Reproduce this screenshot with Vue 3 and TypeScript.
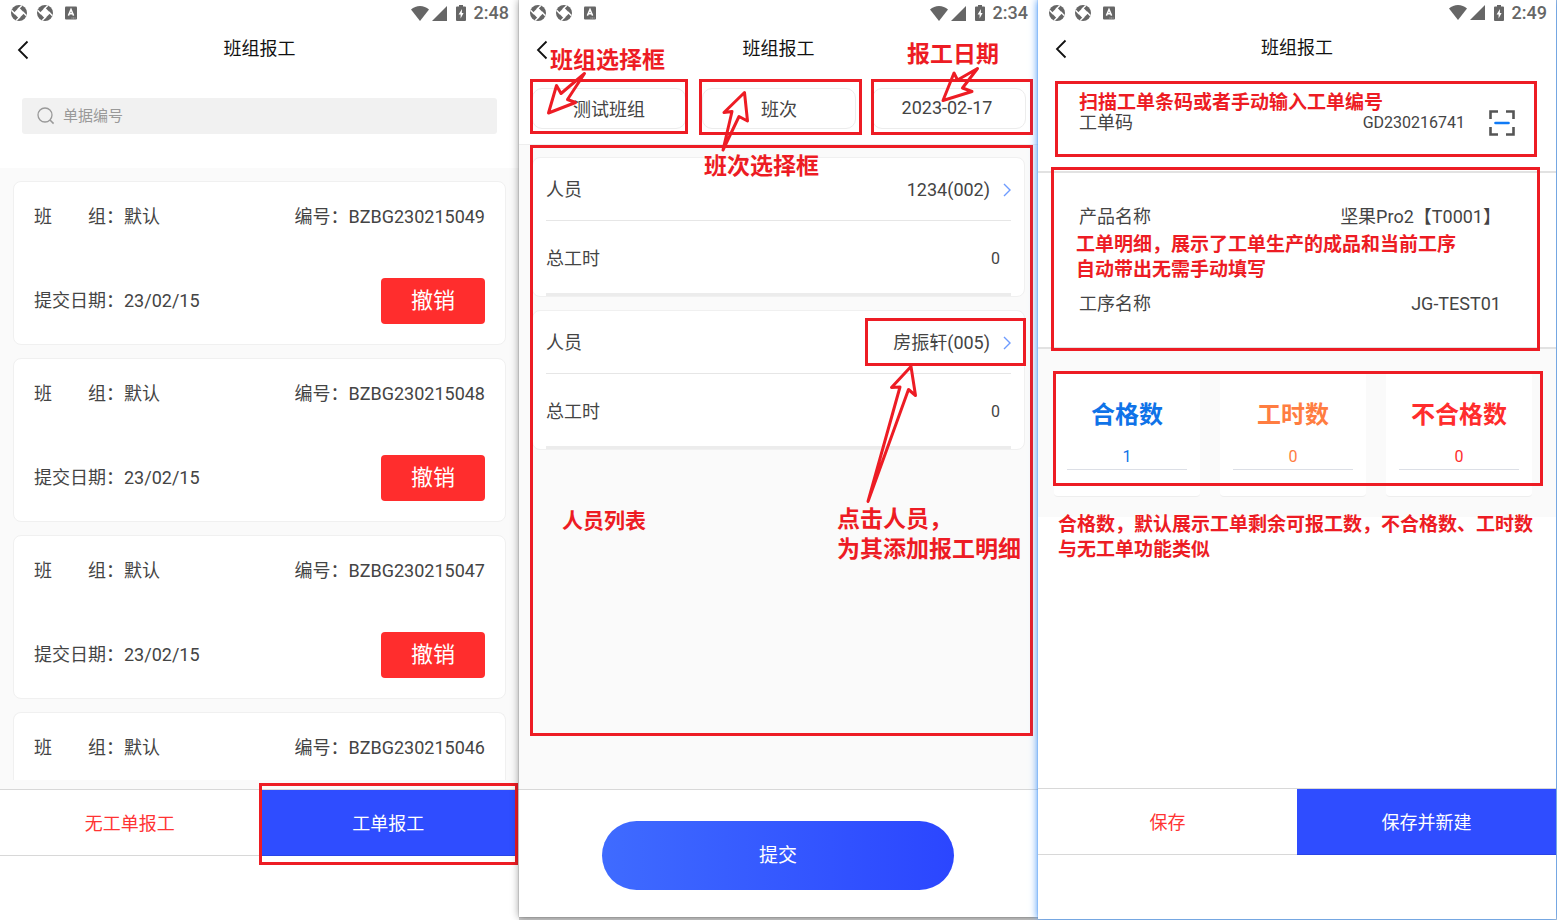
<script setup lang="ts">
import { ref } from 'vue'

interface Report { code: string; team: string; date?: string }
interface Worker { name: string; hours: number }

const screens = [
  { key: 'list', time: '2:48' },
  { key: 'team', time: '2:34' },
  { key: 'order', time: '2:49' },
]

const keyword = ref('')
const team = ref('测试班组')
const shift = ref('班次')
const workDate = ref('2023-02-17')
const orderCode = ref('GD230216741')

const reports: Report[] = [
  { code: 'BZBG230215049', team: '默认', date: '23/02/15' },
  { code: 'BZBG230215048', team: '默认', date: '23/02/15' },
  { code: 'BZBG230215047', team: '默认', date: '23/02/15' },
  { code: 'BZBG230215046', team: '默认' },
]

const workers: Worker[] = [
  { name: '1234(002)', hours: 0 },
  { name: '房振轩(005)', hours: 0 },
]

const counts = ref([
  { id: 'ok', label: '合格数', value: '1' },
  { id: 'hours', label: '工时数', value: '0' },
  { id: 'bad', label: '不合格数', value: '0' },
])
</script>

<template>
  <div class="board">
    <section v-for="s in screens" :key="s.key" class="phone" :class="s.key">
      <div class="status">
        <svg v-for="n in 2" :key="n" class="swirl" viewBox="0 0 16 16" aria-hidden="true">
          <circle cx="8" cy="8" r="8" fill="#666" />
          <path d="M8 2.600 13.400 8 8 13.400 2.600 8Z" fill="#fff" />
          <path d="M7 4.200 10.800.600M11.800 7 15.400 10.800M9 11.800 5.200 15.400M4.200 9 .600 5.200" stroke="#fff" stroke-width="1.400" />
        </svg>
        <svg class="abox" viewBox="0 0 12 14" aria-hidden="true">
          <rect width="12" height="13" y=".5" rx="1" fill="#666" />
          <path d="M3.400 9.600 6 3.400l2.600 6.200M4.400 7.800h3.200" stroke="#fff" stroke-width="1.500" fill="none" />
          <path d="M6.500 12h4" stroke="#ccc" stroke-width=".8" stroke-dasharray="1 .6" />
        </svg>
        <span class="grow"></span>
        <svg class="wifi" viewBox="0 0 18 15" aria-hidden="true">
          <path d="M0 3.600C5-1.200 13-1.200 18 3.600L9 15Z" fill="#666" />
        </svg>
        <svg class="signal" viewBox="0 0 15 15" aria-hidden="true"><path d="M15 0V15H0Z" fill="#666" /></svg>
        <svg class="battery" viewBox="0 0 10 16" aria-hidden="true">
          <path d="M3 0h4v1.600h2q1 0 1 1V15q0 1-1 1H1q-1 0-1-1V2.600q0-1 1-1h2Z" fill="#666" />
          <path d="M6 4 2.600 9.400H4.600V13.600L7.600 8H5.800Z" fill="#fff" />
        </svg>
        <span class="time">{{ s.time }}</span>
      </div>
      <header class="bar">
        <button class="back" type="button" aria-label="返回">
          <svg viewBox="0 0 12 20" aria-hidden="true"><path d="M10.500 1.500 2 10l8.500 8.500" fill="none" stroke="#111" stroke-width="1.800" /></svg>
        </button>
        <h1>班组报工</h1>
      </header>

      <template v-if="s.key === 'list'">
        <div class="search-wrap">
          <label class="search">
            <svg viewBox="0 0 18 18" aria-hidden="true">
              <circle cx="8" cy="8" r="7" fill="none" stroke="#999" stroke-width="1.300" />
              <path d="m13 13 3.600 3.600" stroke="#999" stroke-width="1.500" />
            </svg>
            <input v-model="keyword" type="text" placeholder="单据编号" aria-label="单据编号" />
          </label>
        </div>
        <main class="reports">
          <div class="report-scroll">
            <article v-for="r in reports" :key="r.code" class="report">
              <div class="line">
                <span>班&#x3000;&#x3000;组：{{ r.team }}</span>
                <span>编号：{{ r.code }}</span>
              </div>
              <div v-if="r.date" class="line">
                <span>提交日期：{{ r.date }}</span>
                <button class="revoke" type="button">撤销</button>
              </div>
            </article>
          </div>
        </main>
        <footer class="actions">
          <div class="pair">
            <button type="button">无工单报工</button>
            <button type="button" class="primary">工单报工</button>
          </div>
          <i class="mark m-order"></i>
        </footer>
      </template>

      <template v-else-if="s.key === 'team'">
        <div class="filters">
          <select v-model="team" aria-label="班组"><option>测试班组</option></select>
          <select v-model="shift" aria-label="班次"><option>班次</option></select>
          <input v-model="workDate" type="text" aria-label="报工日期" />
          <i class="mark m-team"></i>
          <i class="mark m-shift"></i>
          <i class="mark m-date"></i>
        </div>
        <main class="workers">
          <article v-for="w in workers" :key="w.name" class="worker">
            <button type="button" class="who">
              <span>人员</span>
              <span class="name">{{ w.name }}</span>
              <svg viewBox="0 0 8 14" aria-hidden="true"><path d="m1 1 6 6-6 6" fill="none" stroke="#6d9bff" stroke-width="1.400" /></svg>
            </button>
            <div class="total"><span>总工时</span><span class="sum">{{ w.hours }}</span></div>
          </article>
          <i class="mark m-list"></i>
          <i class="mark m-person"></i>
        </main>
        <footer class="submit-area"><button type="button" class="submit">提交</button></footer>
        <svg class="arrows" width="518" height="520" viewBox="0 0 518 520" aria-hidden="true">
          <path d="M65.500 73.500 42 93.500 37.500 85.500 29.500 113 56.500 102.500 48.500 99.500Z" />
          <path d="M204 150 213 111.500 205 112.500 225.500 92.500 228.500 121 220 116.500Z" />
          <path d="M458.500 68.500 438.500 80 435 73 424 100.500 453 91.500 443.500 88Z" />
          <path d="M349 501.500 381 387 372.500 387.500 392 366.500 396.500 395.500 389.500 389.500Z" />
        </svg>
        <p class="note big n-team">班组选择框</p>
        <p class="note big n-shift">班次选择框</p>
        <p class="note big n-date">报工日期</p>
        <p class="note mid n-list">人员列表</p>
        <p class="note big n-person">点击人员，<br />为其添加报工明细</p>
      </template>

      <template v-else>
        <div class="code-row">
          <label for="order-code">工单码</label>
          <input id="order-code" v-model="orderCode" type="text" />
          <button type="button" class="scan" aria-label="扫描">
            <svg viewBox="0 0 26 26" aria-hidden="true">
              <path d="M1.500 9V1.500H9M17 1.500h7.500V9M24.500 17v7.500H17M9 24.500H1.500V17" fill="none" stroke="#555" stroke-width="2.600" />
              <path d="M6.500 13h13" stroke="#0f7af5" stroke-width="2.600" stroke-linecap="round" />
            </svg>
          </button>
          <i class="mark m-code"></i>
          <p class="note n-code">扫描工单条码或者手动输入工单编号</p>
        </div>
        <div class="details">
          <div class="detail"><span>产品名称</span><span>坚果Pro2【T0001】</span></div>
          <div class="detail"><span>工序名称</span><span>JG-TEST01</span></div>
          <i class="mark m-details"></i>
          <p class="note n-details">工单明细，展示了工单生产的成品和当前工序<br />自动带出无需手动填写</p>
        </div>
        <div class="counts">
          <div v-for="c in counts" :key="c.id" class="count" :class="c.id">
            <label :for="c.id">{{ c.label }}</label>
            <input :id="c.id" v-model="c.value" type="text" inputmode="numeric" />
          </div>
          <i class="mark m-counts"></i>
          <p class="note n-counts">合格数，默认展示工单剩余可报工数，不合格数、工时数<br />与无工单功能类似</p>
        </div>
        <div class="grow"></div>
        <footer class="actions">
          <div class="pair">
            <button type="button">保存</button>
            <button type="button" class="primary">保存并新建</button>
          </div>
        </footer>
      </template>
    </section>
  </div>
</template>

<style>
body {
  margin: 0;
}
</style>

<style scoped>
.board {
  display: grid;
  grid-template-columns: repeat(3, minmax(0, 1fr));
  height: 100vh;
  min-height: 760px;
  overflow: hidden;
  background: linear-gradient(90deg, #fff 33%, #ccc 33%);
  font-family: Roboto, 'Noto Sans CJK SC', sans-serif;
  font-size: 18px;
  line-height: 24px;
  color: #444;
}
.board * {
  box-sizing: border-box;
}
button,
input,
select {
  font: inherit;
  color: inherit;
  border: 0;
  padding: 0;
  margin: 0;
  background: none;
  border-radius: 0;
  outline: 0;
}
button {
  cursor: pointer;
}
.phone {
  position: relative;
  display: flex;
  flex-direction: column;
  min-width: 0;
  min-height: 0;
  background: #fff;
}
.team {
  z-index: 1;
  margin-bottom: 3px;
  box-shadow: 0 0 8px rgba(0, 0, 0, 0.4), 0 0 1px #777;
}
.order {
  z-index: 2;
  margin: 0 1px 1px 0;
  box-shadow: 0 0 8px #2f88f5, 0 0 1px #2f88f5;
}
.grow {
  flex: 1;
}

/* status bar and title */
.status {
  display: flex;
  align-items: center;
  height: 26px;
  flex: none;
  padding: 0 10px 0 11px;
}
.order .status {
  height: 25px;
  padding-right: 9px;
}
.swirl {
  width: 16px;
  height: 16px;
  margin-right: 10px;
}
.abox {
  width: 12px;
  height: 14px;
  margin-left: 2px;
}
.wifi {
  width: 18px;
  height: 15px;
  margin-right: 3px;
}
.signal {
  width: 15px;
  height: 15px;
  margin-right: 9px;
}
.battery {
  width: 10px;
  height: 16px;
  margin-right: 8px;
}
.time {
  font-weight: 500;
  color: #666;
}
.bar {
  position: relative;
  flex: none;
  height: 46px;
  display: flex;
  align-items: center;
  justify-content: center;
}
h1 {
  margin: 0;
  font-size: 18px;
  font-weight: 400;
  color: #111;
}
.back {
  position: absolute;
  left: 17px;
  top: 14px;
  width: 12px;
  height: 20px;
}
.back svg {
  display: block;
  width: 12px;
  height: 20px;
}

/* report list */
.search-wrap {
  flex: none;
  padding: 26px 22px 34px;
}
.search {
  display: flex;
  align-items: center;
  gap: 8px;
  height: 36px;
  padding: 0 15px;
  border-radius: 3px;
  background: #f1f1f1;
}
.search svg {
  width: 18px;
  height: 18px;
}
.search input {
  flex: 1;
  min-width: 0;
  font-size: 15px;
}
.search input::placeholder {
  color: #999;
  opacity: 1;
}
.reports {
  flex: 1;
  min-height: 0;
  padding: 13px 13px 9px;
  background: #fafafa;
  display: flex;
}
.report-scroll {
  flex: 1;
  display: flex;
  flex-direction: column;
  gap: 13px;
  overflow: auto;
  scrollbar-width: none;
}
.report {
  flex: none;
  padding: 12px 20px 20px;
  border: 1px solid #f0f0f0;
  border-radius: 8px;
  background: #fff;
}
.report:last-child {
  flex: 1 0 auto;
  padding-bottom: 0;
  border-bottom: 0;
  border-radius: 8px 8px 0 0;
}
.line {
  display: flex;
  align-items: center;
  justify-content: space-between;
  height: 46px;
}
.line + .line {
  margin-top: 38px;
}
.revoke {
  width: 104px;
  height: 46px;
  border-radius: 4px;
  background: #ff2d2d;
  color: #fff;
  font-size: 22px;
}

/* bottom action pair */
.actions {
  position: relative;
  flex: none;
  padding-bottom: 64px;
}
.pair {
  display: grid;
  grid-template-columns: 1fr 1fr;
  border-top: 1px solid #d8d8d8;
}
.pair button {
  height: 66px;
  padding-top: 2px;
  color: #ff3333;
  border-bottom: 1px solid #d8d8d8;
}
.pair .primary {
  color: #fff;
  background: #2f4dff;
  border-color: #2945e6;
}
.list .primary {
  margin-right: 2px;
}

/* team screen */
.filters {
  position: relative;
  flex: none;
  display: grid;
  grid-template-columns: repeat(3, minmax(0, 1fr));
  gap: 16px;
  padding: 16px 12px 15px 13px;
  border-bottom: 1px solid #eee;
}
.filters select,
.filters input {
  appearance: none;
  width: 100%;
  height: 41px;
  padding-top: 3px;
  border: 1px solid #ececec;
  border-radius: 10px;
  background: #fff;
  text-align: center;
  text-align-last: center;
}
.filters input {
  padding: 0 4px 3px 0;
}
.workers {
  position: relative;
  flex: 1;
  display: flex;
  flex-direction: column;
  gap: 13px;
  padding: 12px 13px;
  background: #fafafa;
}
.worker {
  height: 140px;
  padding: 0 13px;
  border: 1px solid #f0f0f0;
  border-radius: 8px;
  background: #fff;
}
.who {
  display: flex;
  align-items: center;
  width: 100%;
  height: 63px;
  padding-top: 2px;
  border-bottom: 1px solid #e6e6e6;
}
.who .name {
  margin-left: auto;
  margin-right: 13px;
}
.who svg {
  width: 8px;
  height: 14px;
}
.total {
  display: flex;
  align-items: center;
  justify-content: space-between;
  height: 75px;
  padding: 3px 11px 0 0;
  border-bottom: 3px solid #ececec;
}
.sum {
  font-size: 16px;
}
.submit-area {
  flex: none;
  padding: 31px 84px 27px 83px;
  border-top: 1px solid #d8d8d8;
}
.submit {
  width: 100%;
  height: 69px;
  border-radius: 35px;
  background: linear-gradient(90deg, #3f6bff, #2b46ff);
  color: #fff;
  font-size: 19px;
}

/* order screen */
.code-row {
  position: relative;
  flex: none;
  display: flex;
  align-items: center;
  height: 102px;
  padding: 3px 41px 0;
  border-bottom: 2px solid #e2e2e2;
}
.code-row input {
  flex: 1;
  min-width: 0;
  margin-right: 24px;
  text-align: right;
  font-size: 16px;
}
.scan svg {
  display: block;
  width: 26px;
  height: 26px;
}
.details {
  position: relative;
  z-index: 1;
  flex: none;
  display: flex;
  flex-direction: column;
  gap: 63px;
  padding: 32px 55px 31px 41px;
  border-bottom: 2px solid #e2e2e2;
}
.detail {
  display: flex;
  justify-content: space-between;
}
.counts {
  position: relative;
  flex: none;
  display: grid;
  grid-template-columns: repeat(3, minmax(0, 1fr));
  gap: 20px;
  padding: 23px 24px 20px 16px;
  background: #fafafa;
}
.count {
  display: flex;
  flex-direction: column;
  padding: 27px 13px 26px;
  border-bottom: 1px solid #eee;
  border-radius: 4px;
  background: #fff;
  text-align: center;
}
.count label {
  font-size: 24px;
  line-height: 32px;
  font-weight: 700;
}
.count input {
  width: 100%;
  height: 26px;
  margin-top: 13px;
  border-bottom: 1px solid #dcdfe6;
  text-align: center;
  font-size: 16px;
}
.ok {
  color: #0f73e8;
}
.hours {
  color: #ff7d41;
}
.bad {
  color: #ff2d2d;
}

/* guide marks laid over the screens */
.mark {
  position: absolute;
  border: 3px solid #ed1c24;
  pointer-events: none;
}
.m-order {
  left: 50%;
  right: 1px;
  top: -6px;
  height: 82px;
  margin-left: -1px;
}
.m-team {
  left: 11px;
  top: 7px;
  width: 158px;
  height: 55px;
}
.m-shift {
  left: 180px;
  top: 7px;
  width: 163px;
  height: 56px;
}
.m-date {
  left: 352px;
  right: 5px;
  top: 7px;
  height: 56px;
}
.m-list {
  left: 11px;
  right: 5px;
  top: 0;
  bottom: 53px;
}
.m-person {
  right: 12px;
  top: 173px;
  width: 161px;
  height: 48px;
}
.m-code {
  left: 17px;
  right: 19px;
  top: 10px;
  height: 76px;
}
.m-details {
  left: 13px;
  right: 16px;
  top: -6px;
  bottom: -4px;
}
.m-counts {
  left: 15px;
  right: 13px;
  top: 22px;
  height: 115px;
}
.arrows {
  position: absolute;
  left: 0;
  top: 0;
  pointer-events: none;
}
.arrows path {
  fill: none;
  stroke: #ed1c24;
  stroke-width: 3px;
  stroke-linejoin: round;
}
.note {
  position: absolute;
  margin: 0;
  font-size: 19px;
  line-height: 25px;
  font-weight: 700;
  color: #ed1c24;
  white-space: nowrap;
  pointer-events: none;
}
.big {
  font-size: 23px;
  line-height: 30px;
}
.mid {
  font-size: 21px;
  line-height: 30px;
}
.n-team {
  left: 31px;
  top: 46px;
}
.n-shift {
  left: 185px;
  top: 152px;
}
.n-date {
  left: 388px;
  top: 40px;
}
.n-list {
  left: 43px;
  top: 506px;
}
.n-person {
  left: 318px;
  top: 505px;
}
.n-code {
  left: 41px;
  top: 19px;
}
.n-details {
  left: 38px;
  top: 59px;
}
.n-counts {
  left: 20px;
  top: 163px;
}
</style>
